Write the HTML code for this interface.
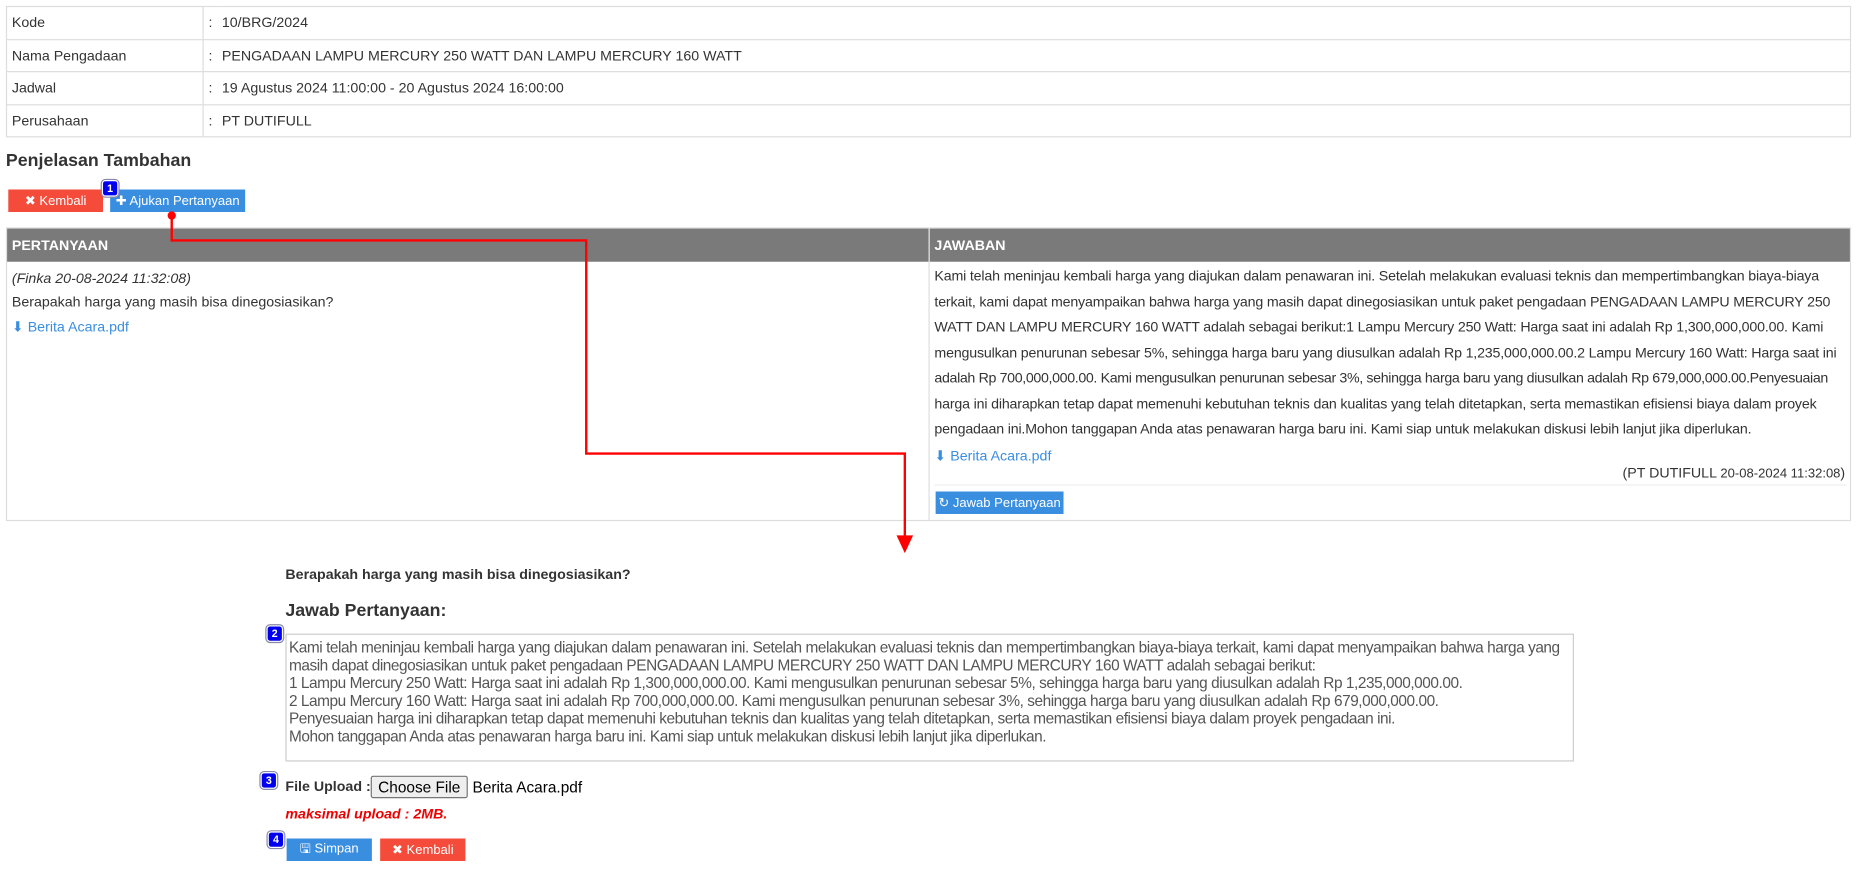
<!DOCTYPE html>
<html><head><meta charset="utf-8"><style>
*{box-sizing:border-box}
html,body{margin:0;padding:0}
body{width:1857px;height:871px;background:#fff;overflow:hidden}
#w{position:absolute;left:0;top:0;width:1568px;height:736px;transform:scale(1.18432);transform-origin:0 0;font-family:"Liberation Sans",sans-serif;font-size:12px;color:#333}
.abs{position:absolute}
table.info{position:absolute;left:5px;top:5px;width:1558px;border-collapse:collapse}
table.info td{border:1px solid #ddd;height:27.5px;padding:0 4px;font-size:12px}
.btn{position:absolute;color:#fff;font-size:11px;display:flex;align-items:center;justify-content:center;white-space:nowrap}
.red{background:#f44b3a}.blue{background:#3a8ee0}
.badge{position:absolute;width:14px;height:14px;background:#0000ee;color:#fff;border:1px solid #fff;outline:1px solid #88a;border-radius:3px;font-size:9px;font-weight:bold;text-align:center;line-height:12px}
.main{position:absolute;left:5px;top:192px;width:1558px;height:248px;border:1px solid #ddd}
.hd{position:absolute;top:0;height:28px;background:#7a7a7a;color:#fff;font-weight:bold;font-size:12px;line-height:28px;padding-left:4px}
a{color:#3a8ee0;text-decoration:none}
</style></head><body><div id="w">
<table class="info">
<tr><td style="width:166px">Kode</td><td style="width:10px;border-right:none">:</td><td style="border-left:none">10/BRG/2024</td></tr>
<tr><td>Nama Pengadaan</td><td style="border-right:none">:</td><td style="border-left:none">PENGADAAN LAMPU MERCURY 250 WATT DAN LAMPU MERCURY 160 WATT</td></tr>
<tr><td>Jadwal</td><td style="border-right:none">:</td><td style="border-left:none">19 Agustus 2024 11:00:00 - 20 Agustus 2024 16:00:00</td></tr>
<tr><td>Perusahaan</td><td style="border-right:none">:</td><td style="border-left:none">PT DUTIFULL</td></tr>
</table>
<div class="abs" style="left:5px;top:127px;font-size:15px;font-weight:bold">Penjelasan Tambahan</div>
<div class="btn red" style="left:7px;top:160px;width:80px;height:19px">✖ Kembali</div>
<div class="btn blue" style="left:93px;top:160px;width:114px;height:19px">✚ Ajukan Pertanyaan</div>
<div class="badge" style="left:86px;top:152px">1</div>
<div class="main">
<div class="hd" style="left:0;width:778px">PERTANYAAN</div>
<div class="hd" style="left:779px;width:777px">JAWABAN</div>
<div class="abs" style="left:778px;top:0;width:1px;height:246px;background:#ddd"></div>
<div class="abs" style="left:4px;top:35px;font-style:italic">(Finka 20-08-2024 11:32:08)</div>
<div class="abs" style="left:4px;top:55px">Berapakah harga yang masih bisa dinegosiasikan?</div>
<div class="abs" style="left:4px;top:76px"><a>⬇ Berita Acara.pdf</a></div>
<div class="abs" style="left:783px;top:30px;width:774px">
<div style="line-height:21.5px;letter-spacing:-0.15px;white-space:nowrap">Kami telah meninjau kembali harga yang diajukan dalam penawaran ini. Setelah melakukan evaluasi teknis dan mempertimbangkan biaya-biaya<br>terkait, kami dapat menyampaikan bahwa harga yang masih dapat dinegosiasikan untuk paket pengadaan PENGADAAN LAMPU MERCURY 250<br>WATT DAN LAMPU MERCURY 160 WATT adalah sebagai berikut:1 Lampu Mercury 250 Watt: Harga saat ini adalah Rp 1,300,000,000.00. Kami<br>mengusulkan penurunan sebesar 5%, sehingga harga baru yang diusulkan adalah Rp 1,235,000,000.00.2 Lampu Mercury 160 Watt: Harga saat ini<br><span style="letter-spacing:-0.3px">adalah Rp 700,000,000.00. Kami mengusulkan penurunan sebesar 3%, sehingga harga baru yang diusulkan adalah Rp 679,000,000.00.Penyesuaian</span><br>harga ini diharapkan tetap dapat memenuhi kebutuhan teknis dan kualitas yang telah ditetapkan, serta memastikan efisiensi biaya dalam proyek<br>pengadaan ini.Mohon tanggapan Anda atas penawaran harga baru ini. Kami siap untuk melakukan diskusi lebih lanjut jika diperlukan.</div>
<div style="margin-top:4px"><a>⬇ Berita Acara.pdf</a></div>
</div>
<div class="abs" style="right:4px;top:199px">(PT DUTIFULL <span style="font-size:11px">20-08-2024 11:32:08</span>)</div>
<div class="abs" style="left:783px;top:216px;width:770px;height:1px;background:#eee"></div>
<div class="btn blue" style="left:784px;top:222px;width:108px;height:19px">↻ Jawab Pertanyaan</div>
</div>
<svg class="abs" style="left:0;top:0" width="1568" height="736">
<circle cx="145" cy="182" r="3.5" fill="#f00"/>
<polyline points="145,182 145,203 495,203 495,383 764,383 764,455" fill="none" stroke="#f00" stroke-width="2"/>
<polygon points="757,452 771,452 764,467" fill="#f00"/>
</svg>
<div class="abs" style="left:241px;top:478px;font-weight:bold">Berapakah harga yang masih bisa dinegosiasikan?</div>
<div class="abs" style="left:241px;top:507px;font-size:15px;font-weight:bold">Jawab Pertanyaan:</div>
<div class="badge" style="left:225px;top:528px">2</div>
<div class="abs" style="left:241px;top:535px;width:1088px;height:108px;border:1px solid #ccc;padding:3px 2px;font-size:13px;line-height:15px;color:#555;letter-spacing:-0.38px">Kami telah meninjau kembali harga yang diajukan dalam penawaran ini. Setelah melakukan evaluasi teknis dan mempertimbangkan biaya-biaya terkait, kami dapat menyampaikan bahwa harga yang masih dapat dinegosiasikan untuk paket pengadaan PENGADAAN LAMPU MERCURY 250 WATT DAN LAMPU MERCURY 160 WATT adalah sebagai berikut:<br>1 Lampu Mercury 250 Watt: Harga saat ini adalah Rp 1,300,000,000.00. Kami mengusulkan penurunan sebesar 5%, sehingga harga baru yang diusulkan adalah Rp 1,235,000,000.00.<br>2 Lampu Mercury 160 Watt: Harga saat ini adalah Rp 700,000,000.00. Kami mengusulkan penurunan sebesar 3%, sehingga harga baru yang diusulkan adalah Rp 679,000,000.00.<br>Penyesuaian harga ini diharapkan tetap dapat memenuhi kebutuhan teknis dan kualitas yang telah ditetapkan, serta memastikan efisiensi biaya dalam proyek pengadaan ini.<br>Mohon tanggapan Anda atas penawaran harga baru ini. Kami siap untuk melakukan diskusi lebih lanjut jika diperlukan.</div>
<div class="badge" style="left:220px;top:652px">3</div>
<div class="abs" style="left:241px;top:657px;font-weight:bold">File Upload :</div>
<div class="abs" style="left:313px;top:655px;width:82px;height:19px;border:1px solid #767676;border-radius:2px;background:#efefef;font-size:13px;text-align:center;line-height:17px;color:#000">Choose File</div>
<div class="abs" style="left:399px;top:657px;font-size:13px;color:#000">Berita Acara.pdf</div>
<div class="abs" style="left:241px;top:680px;color:#e00;font-weight:bold;font-style:italic">maksimal upload : 2MB.</div>
<div class="badge" style="left:226px;top:702px">4</div>
<div class="btn blue" style="left:242px;top:708px;width:72px;height:19px">🖫 Simpan</div>
<div class="btn red" style="left:321px;top:708px;width:72px;height:19px">✖ Kembali</div>
</div></body></html>
